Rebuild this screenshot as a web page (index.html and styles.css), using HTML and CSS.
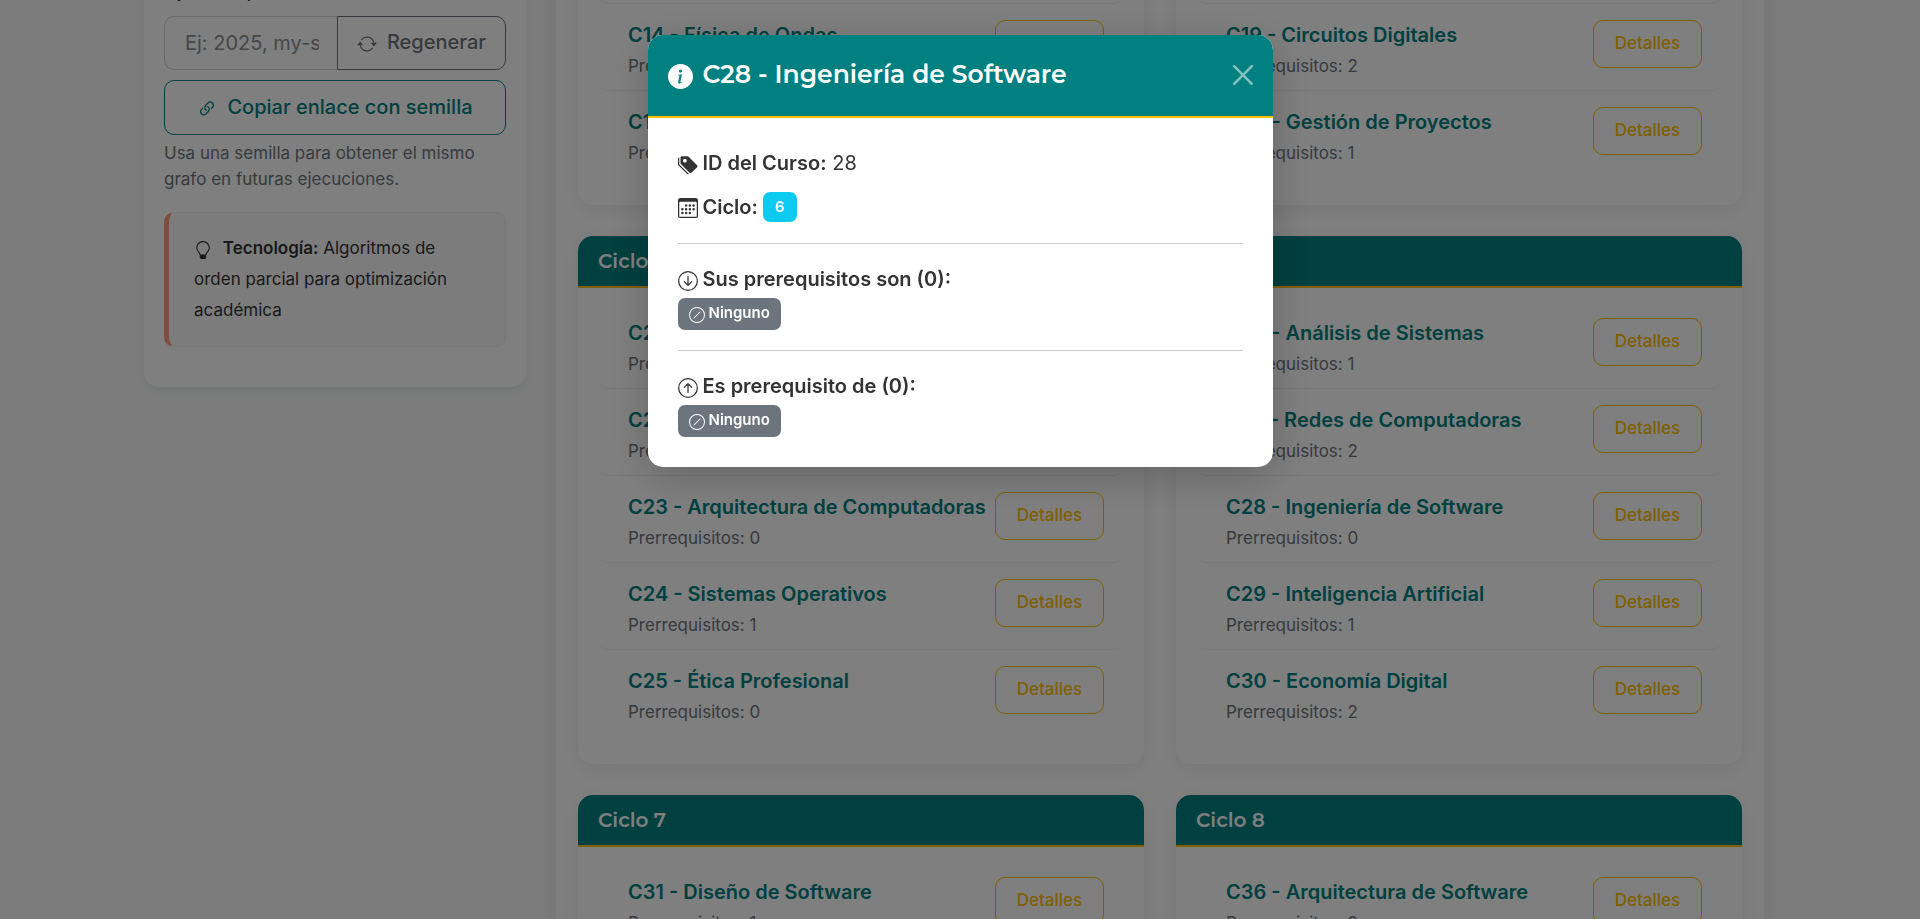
FILE: index.html
```html
<!DOCTYPE html>
<html lang="es">
<head>
<meta charset="utf-8">
<title>Malla curricular</title>
<link rel="stylesheet" href="styles.css">
</head>
<body>
<div class="layout">
  <aside class="sidebar">
    <label class="field-label" for="seed">opcional, texto o número</label>
    <div class="seed-group">
      <input id="seed" class="seed-input" type="text" placeholder="Ej: 2025, my-seed">
      <button class="btn btn-secondary" type="button">
        <svg class="icon" viewBox="0 0 16 16" aria-hidden="true"><path d="M11.534 7h3.932a.25.25 0 0 1 .192.41l-1.966 2.36a.25.25 0 0 1-.384 0l-1.966-2.36a.25.25 0 0 1 .192-.41m-11 2h3.932a.25.25 0 0 0 .192-.41L2.692 6.23a.25.25 0 0 0-.384 0L.342 8.59A.25.25 0 0 0 .534 9"/><path fill-rule="evenodd" d="M8 3c-1.552 0-2.94.707-3.857 1.818a.5.5 0 1 1-.771-.636A6.002 6.002 0 0 1 13.917 7H12.9A5 5 0 0 0 8 3M3.1 9a5.002 5.002 0 0 0 8.757 2.182.5.5 0 1 1 .771.636A6.002 6.002 0 0 1 2.083 9z"/></svg>
        <span>Regenerar</span>
      </button>
    </div>
    <button class="btn btn-primary" type="button">
      <svg class="icon" viewBox="0 0 16 16" aria-hidden="true"><path d="M4.715 6.542 3.343 7.914a3 3 0 1 0 4.243 4.243l1.828-1.829A3 3 0 0 0 8.586 5.5L8 6.086a1 1 0 0 0-.154.199 2 2 0 0 1 .861 3.337L6.88 11.45a2 2 0 1 1-2.83-2.83l.793-.792a4 4 0 0 1-.128-1.287z"/><path d="M6.586 4.672A3 3 0 0 0 7.414 9.5l.775-.776a2 2 0 0 1-.896-3.346L9.12 3.55a2 2 0 1 1 2.83 2.83l-.793.792c.112.42.155.855.128 1.287l1.372-1.372a3 3 0 1 0-4.243-4.243z"/></svg>
      <span>Copiar enlace con semilla</span>
    </button>
    <p class="help">Usa una semilla para obtener el mismo grafo en futuras ejecuciones.</p>
    <div class="note">
      <svg class="icon note-icon" viewBox="0 0 16 16" aria-hidden="true"><path d="M2 6a6 6 0 1 1 10.174 4.31c-.203.196-.359.4-.453.619l-.762 1.769A.5.5 0 0 1 10.5 13a.5.5 0 0 1 0 1 .5.5 0 0 1 0 1l-.224.447a1 1 0 0 1-.894.553H6.618a1 1 0 0 1-.894-.553L5.5 15a.5.5 0 0 1 0-1 .5.5 0 0 1 0-1 .5.5 0 0 1-.46-.302l-.761-1.77a2 2 0 0 0-.453-.618A5.98 5.98 0 0 1 2 6m6-5a5 5 0 0 0-3.479 8.592c.263.254.514.564.676.941L5.83 12h4.342l.632-1.467c.162-.377.413-.687.676-.941A5 5 0 0 0 8 1"/></svg>
      <strong>Tecnología:</strong> Algoritmos de orden parcial para optimización académica
    </div>
  </aside>

  <main class="cycles">
    <section class="card">
      <h2 class="card-title">Ciclo 3</h2>
      <ul class="courses">
        <li class="course"><div><h3>C13 - Cálculo</h3><p>Prerrequisitos: 1</p></div><button class="btn btn-detail" type="button">Detalles</button></li>
        <li class="course"><div><h3>C14 - Física de Ondas</h3><p>Prerrequisitos: 1</p></div><button class="btn btn-detail" type="button">Detalles</button></li>
        <li class="course"><div><h3>C15 - Bases de Datos</h3><p>Prerrequisitos: 1</p></div><button class="btn btn-detail" type="button">Detalles</button></li>
      </ul>
    </section>
    <section class="card">
      <h2 class="card-title">Ciclo 4</h2>
      <ul class="courses">
        <li class="course"><div><h3>C18 - Electrónica</h3><p>Prerrequisitos: 1</p></div><button class="btn btn-detail" type="button">Detalles</button></li>
        <li class="course"><div><h3>C19 - Circuitos Digitales</h3><p>Prerrequisitos: 2</p></div><button class="btn btn-detail" type="button">Detalles</button></li>
        <li class="course"><div><h3>C20 - Gestión de Proyectos</h3><p>Prerrequisitos: 1</p></div><button class="btn btn-detail" type="button">Detalles</button></li>
      </ul>
    </section>
    <section class="card">
      <h2 class="card-title">Ciclo 5</h2>
      <ul class="courses">
        <li class="course"><div><h3>C21 - Compiladores</h3><p>Prerrequisitos: 1</p></div><button class="btn btn-detail" type="button">Detalles</button></li>
        <li class="course"><div><h3>C22 - Estadística</h3><p>Prerrequisitos: 1</p></div><button class="btn btn-detail" type="button">Detalles</button></li>
        <li class="course"><div><h3>C23 - Arquitectura de Computadoras</h3><p>Prerrequisitos: 0</p></div><button class="btn btn-detail" type="button">Detalles</button></li>
        <li class="course"><div><h3>C24 - Sistemas Operativos</h3><p>Prerrequisitos: 1</p></div><button class="btn btn-detail" type="button">Detalles</button></li>
        <li class="course"><div><h3>C25 - Ética Profesional</h3><p>Prerrequisitos: 0</p></div><button class="btn btn-detail" type="button">Detalles</button></li>
      </ul>
    </section>
    <section class="card">
      <h2 class="card-title">Ciclo 6</h2>
      <ul class="courses">
        <li class="course"><div><h3>C26 - Análisis de Sistemas</h3><p>Prerrequisitos: 1</p></div><button class="btn btn-detail" type="button">Detalles</button></li>
        <li class="course"><div><h3>C27 - Redes de Computadoras</h3><p>Prerrequisitos: 2</p></div><button class="btn btn-detail" type="button">Detalles</button></li>
        <li class="course"><div><h3>C28 - Ingeniería de Software</h3><p>Prerrequisitos: 0</p></div><button class="btn btn-detail" type="button">Detalles</button></li>
        <li class="course"><div><h3>C29 - Inteligencia Artificial</h3><p>Prerrequisitos: 1</p></div><button class="btn btn-detail" type="button">Detalles</button></li>
        <li class="course"><div><h3>C30 - Economía Digital</h3><p>Prerrequisitos: 2</p></div><button class="btn btn-detail" type="button">Detalles</button></li>
      </ul>
    </section>
    <section class="card">
      <h2 class="card-title">Ciclo 7</h2>
      <ul class="courses">
        <li class="course"><div><h3>C31 - Diseño de Software</h3><p>Prerrequisitos: 1</p></div><button class="btn btn-detail" type="button">Detalles</button></li>
      </ul>
    </section>
    <section class="card">
      <h2 class="card-title">Ciclo 8</h2>
      <ul class="courses">
        <li class="course"><div><h3>C36 - Arquitectura de Software</h3><p>Prerrequisitos: 2</p></div><button class="btn btn-detail" type="button">Detalles</button></li>
      </ul>
    </section>
  </main>
</div>

<div class="backdrop">
  <div class="modal" role="dialog" aria-modal="true" aria-labelledby="modal-title">
    <header class="modal-header">
      <svg class="icon modal-icon" viewBox="0 0 16 16" aria-hidden="true"><path d="M8 16A8 8 0 1 0 8 0a8 8 0 0 0 0 16m.93-9.412-1 4.705c-.07.34.029.533.304.533.194 0 .487-.07.686-.246l-.088.416c-.287.346-.92.598-1.465.598-.703 0-1.002-.422-.808-1.319l.738-3.468c.064-.293.006-.399-.287-.47l-.451-.081.082-.381 2.29-.287zM8 5.5a1 1 0 1 1 0-2 1 1 0 0 1 0 2"/></svg>
      <h1 id="modal-title" class="modal-title">C28 - Ingeniería de Software</h1>
      <button class="close" type="button" aria-label="Cerrar">
        <svg class="icon" viewBox="0 0 16 16" aria-hidden="true"><path d="M.293.293a1 1 0 0 1 1.414 0L8 6.586 14.293.293a1 1 0 1 1 1.414 1.414L9.414 8l6.293 6.293a1 1 0 0 1-1.414 1.414L8 9.414l-6.293 6.293a1 1 0 0 1-1.414-1.414L6.586 8 .293 1.707a1 1 0 0 1 0-1.414"/></svg>
      </button>
    </header>
    <div class="modal-body">
      <p class="row row-id">
        <svg class="icon" viewBox="0 0 16 16" aria-hidden="true"><path d="M2 2a1 1 0 0 1 1-1h4.586a1 1 0 0 1 .707.293l7 7a1 1 0 0 1 0 1.414l-4.586 4.586a1 1 0 0 1-1.414 0l-7-7A1 1 0 0 1 2 6.586zm3.5 4a1.5 1.5 0 1 0 0-3 1.5 1.5 0 0 0 0 3"/><path d="M1.293 7.793A1 1 0 0 1 1 7.086V2a1 1 0 0 0-1 1v4.586a1 1 0 0 0 .293.707l7 7a1 1 0 0 0 1.414 0l.043-.043z"/></svg>
        <span><strong>ID del Curso:</strong> 28</span>
      </p>
      <p class="row row-cycle">
        <svg class="icon" viewBox="0 0 16 16" aria-hidden="true"><path d="M14 0H2a2 2 0 0 0-2 2v12a2 2 0 0 0 2 2h12a2 2 0 0 0 2-2V2a2 2 0 0 0-2-2M1 3.857C1 3.384 1.448 3 2 3h12c.552 0 1 .384 1 .857v10.286c0 .473-.448.857-1 .857H2c-.552 0-1-.384-1-.857z"/><path d="M6.5 7a1 1 0 1 0 0-2 1 1 0 0 0 0 2m3 0a1 1 0 1 0 0-2 1 1 0 0 0 0 2m3 0a1 1 0 1 0 0-2 1 1 0 0 0 0 2m-9 3a1 1 0 1 0 0-2 1 1 0 0 0 0 2m3 0a1 1 0 1 0 0-2 1 1 0 0 0 0 2m3 0a1 1 0 1 0 0-2 1 1 0 0 0 0 2m3 0a1 1 0 1 0 0-2 1 1 0 0 0 0 2m-9 3a1 1 0 1 0 0-2 1 1 0 0 0 0 2m3 0a1 1 0 1 0 0-2 1 1 0 0 0 0 2m3 0a1 1 0 1 0 0-2 1 1 0 0 0 0 2"/></svg>
        <strong>Ciclo:</strong>
        <span class="badge badge-info">6</span>
      </p>
      <hr class="rule">
      <p class="row">
        <svg class="icon" viewBox="0 0 16 16" aria-hidden="true"><path fill-rule="evenodd" d="M1 8a7 7 0 1 0 14 0A7 7 0 0 0 1 8m15 0A8 8 0 1 1 0 8a8 8 0 0 1 16 0M8.5 4.5a.5.5 0 0 0-1 0v5.793L5.354 8.146a.5.5 0 1 0-.708.708l3 3a.5.5 0 0 0 .708 0l3-3a.5.5 0 0 0-.708-.708L8.5 10.293z"/></svg>
        <strong>Sus prerequisitos son (0):</strong>
      </p>
      <span class="badge badge-none"><svg class="icon" viewBox="0 0 16 16" aria-hidden="true"><path d="M8 15A7 7 0 1 1 8 1a7 7 0 0 1 0 14m0 1A8 8 0 1 0 8 0a8 8 0 0 0 0 16"/><path d="M11.354 4.646a.5.5 0 0 0-.708 0l-6 6a.5.5 0 0 0 .708.708l6-6a.5.5 0 0 0 0-.708"/></svg>Ninguno</span>
      <hr class="rule">
      <p class="row">
        <svg class="icon" viewBox="0 0 16 16" aria-hidden="true"><path fill-rule="evenodd" d="M1 8a7 7 0 1 0 14 0A7 7 0 0 0 1 8m15 0A8 8 0 1 1 0 8a8 8 0 0 1 16 0m-7.5 3.5a.5.5 0 0 1-1 0V5.707L5.354 7.854a.5.5 0 1 1-.708-.708l3-3a.5.5 0 0 1 .708 0l3 3a.5.5 0 0 1-.708.708L8.5 5.707z"/></svg>
        <strong>Es prerequisito de (0):</strong>
      </p>
      <span class="badge badge-none"><svg class="icon" viewBox="0 0 16 16" aria-hidden="true"><path d="M8 15A7 7 0 1 1 8 1a7 7 0 0 1 0 14m0 1A8 8 0 1 0 8 0a8 8 0 0 0 0 16"/><path d="M11.354 4.646a.5.5 0 0 0-.708 0l-6 6a.5.5 0 0 0 .708.708l6-6a.5.5 0 0 0 0-.708"/></svg>Ninguno</span>
    </div>
  </div>
</div>
</body>
</html>
```

FILE: styles.css
```css
:root {
  --teal: #008080;
  --gold: #ffc000;
  --gray: #6c757d;
  --ink: #333333;
}

* {
  box-sizing: border-box;
}

body {
  margin: 0;
  height: 100vh;
  overflow: hidden;
  background: #f8f9fa;
  color: var(--ink);
  font: 400 20px/30px Inter, "Liberation Sans", sans-serif;
}

h1,
h2,
h3,
p,
ul {
  margin: 0;
  padding: 0;
}

strong {
  font-weight: 600;
}

.icon {
  width: 20px;
  height: 20px;
  flex: none;
  fill: currentColor;
}

.layout {
  display: grid;
  grid-template-columns: 382px 1fr;
  gap: 30px;
  align-items: start;
  height: 100vh;
  overflow: hidden;
  padding: 0 156px 0 144px;
}

/* Sidebar */
.sidebar {
  margin-top: -45px;
  padding: 20px 20px 40px;
  background: #fff;
  border-radius: 15px;
  box-shadow: 0 4px 8px rgba(0, 60, 60, 0.07);
}

.field-label {
  display: block;
  margin-bottom: 11px;
  font-weight: 600;
}

.seed-group {
  display: flex;
  margin-bottom: 10px;
}

.seed-input {
  flex: 1;
  min-width: 0;
  height: 54px;
  padding: 0 18px 0 20px;
  border: 1px solid #ced4da;
  border-right: 0;
  border-radius: 10px 0 0 10px;
  background: #fff;
  font: inherit;
}

.seed-input::placeholder {
  color: #8f8f8f;
  opacity: 1;
}

.btn {
  display: flex;
  align-items: center;
  justify-content: center;
  gap: 10px;
  padding: 0 0 2px;
  background: transparent;
  border: 1px solid currentColor;
  border-radius: 10px;
  font: 500 20px/30px Inter, "Liberation Sans", sans-serif;
}

.btn .icon {
  margin-top: 4px;
}

.btn-secondary {
  padding: 0 19px 2px;
  border-radius: 0 10px 10px 0;
  color: var(--gray);
}

.btn-primary {
  width: 100%;
  height: 55px;
  color: var(--teal);
}

.help {
  margin-top: 5px;
  color: var(--gray);
  font-size: 17px;
  line-height: 26px;
}

.note {
  margin-top: 20px;
  padding: 20px 25px;
  border: 1px solid #eceeef;
  border-left: 5px solid #ff9a7b;
  border-radius: 10px;
  background: #f9f9f9;
  font-size: 17px;
  line-height: 31px;
}

.note-icon {
  width: 18px;
  height: 18px;
  margin-right: 6px;
  vertical-align: -5px;
}

/* Course cycles */
.cycles {
  display: grid;
  grid-template-columns: repeat(2, minmax(0, 1fr));
  gap: 31px 32px;
  margin-top: -149px;
  padding: 0 22px;
  background: #fff;
  box-shadow: 0 4px 30px rgba(0, 0, 0, 0.08);
}

.card {
  background: #fff;
  border-radius: 15px;
  box-shadow: 0 5px 20px rgba(0, 0, 0, 0.08);
}

.card-title {
  padding: 10px 20px;
  border-bottom: 2px solid var(--gold);
  border-radius: 15px 15px 0 0;
  background: var(--teal);
  color: #fff;
  font: 600 20px/30px Montserrat, Inter, sans-serif;
}

.courses {
  padding: 14px 20px 27px;
  list-style: none;
}

.course {
  display: flex;
  justify-content: space-between;
  align-items: flex-start;
  gap: 8px;
  padding: 16px 20px 8px 30px;
  border-bottom: 1px solid #eeeeee;
  border-radius: 10px;
}

.course:last-child {
  border-bottom-color: transparent;
}

.course h3 {
  color: var(--teal);
  font: 600 20px/31px Inter, sans-serif;
}

.course p {
  color: var(--gray);
  font-size: 17px;
  line-height: 31px;
}

.btn-detail {
  flex: none;
  width: 109px;
  height: 48px;
  color: var(--gold);
  font-size: 17px;
}

/* Modal */
.backdrop {
  position: fixed;
  inset: 0;
  display: flex;
  align-items: flex-start;
  justify-content: center;
  padding-top: 35px;
  background: rgba(0, 0, 0, 0.5);
}

.modal {
  width: 625px;
  background: #fff;
  border-radius: 15px;
  box-shadow: 0 10px 40px rgba(0, 0, 0, 0.2);
}

.modal-header {
  display: flex;
  align-items: center;
  padding: 19px 20px 21px;
  border-bottom: 2px solid var(--gold);
  border-radius: 15px 15px 0 0;
  background: var(--teal);
  color: #fff;
}

.modal-icon {
  width: 25px;
  height: 25px;
  margin-top: 4px;
}

.modal-title {
  flex: 1;
  margin-left: 10px;
  font: 600 25px/41px Montserrat, Inter, sans-serif;
}

.close {
  display: flex;
  padding: 0;
  border: 0;
  background: none;
  color: #fff;
  opacity: 0.5;
}

.modal-body {
  padding: 30px;
}

.row {
  display: flex;
  align-items: center;
  gap: 5px;
}

.row .icon {
  margin-top: 3px;
}

.row-id {
  margin-bottom: 12px;
}

.row-cycle {
  min-height: 33px;
}

.badge {
  display: flex;
  align-items: center;
  gap: 4px;
  width: fit-content;
  border-radius: 7px;
  color: #fff;
  font-size: 15px;
  font-weight: 600;
}

.badge-info {
  padding: 0 12px;
  background: #0dcaf0;
}

.badge-none {
  margin-top: 4px;
  padding: 0 11px 2px;
  background: var(--gray);
}

.badge-none .icon {
  width: 16px;
  height: 16px;
  margin-top: 3px;
}

.rule {
  margin: 20px 0;
  border: 0;
  border-top: 1px solid #cccccc;
}
```
